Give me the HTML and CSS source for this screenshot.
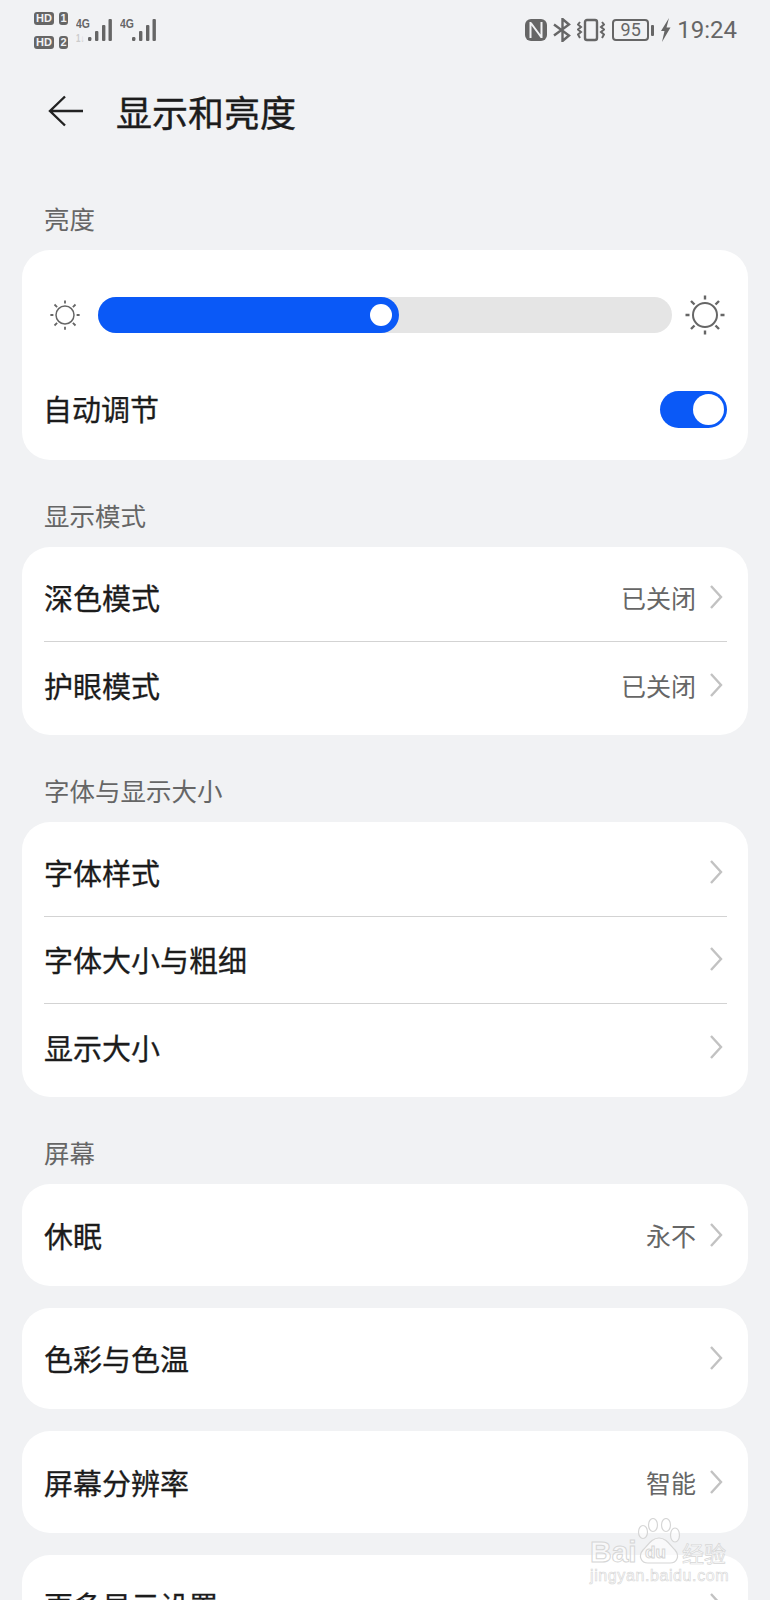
FILE: index.html
```html
<!DOCTYPE html>
<html lang="zh">
<head>
  <meta charset="utf-8">
  <title>显示和亮度</title>
  <link rel="stylesheet" href="styles.css">
</head>
<body>
  <svg class="sprite" width="0" height="0">
    <symbol id="chev" viewBox="0 0 14 24"><path d="M2 1l10 11L2 23" fill="none" stroke="#c2c2c2" stroke-width="2.4"/></symbol>
    <symbol id="sun" viewBox="0 0 40 40">
      <circle cx="20" cy="20" r="12" fill="none" stroke="#666" stroke-width="2"/>
      <path d="M20 .5v4M20 35.500v4M.5 20h4M35.500 20h4M6 6l3.500 3.500M30.500 30.500L34 34M6 34l3.500-3.500M30.500 9.500L34 6" stroke="#666" stroke-width="2.400" fill="none"/>
    </symbol>
    <symbol id="bars" viewBox="0 0 24 22">
      <rect x="0" y="18" width="3.400" height="4" rx="1.200"/><rect x="7" y="12" width="3.400" height="10" rx="1"/><rect x="14" y="6" width="3.400" height="16" rx="1"/><rect x="20.500" y="0" width="3.400" height="22" rx="1"/>
    </symbol>
  </svg>

  <!-- status bar -->
  <div class="status">
    <div class="status-left">
      <div class="sims">
        <div class="sim"><span class="hd">HD</span><span class="simnum">1</span></div>
        <div class="sim"><span class="hd">HD</span><span class="simnum">2</span></div>
      </div>
      <div class="signal"><span class="net">4G</span><span class="net net-low">1↓</span><svg class="bars" width="24" height="22"><use href="#bars"/></svg></div>
      <div class="signal"><span class="net">4G</span><svg class="bars" width="24" height="22"><use href="#bars"/></svg></div>
    </div>
    <div class="status-right">
      <svg width="22" height="22" viewBox="0 0 22 22"><rect width="22" height="22" rx="6" fill="#666"/><path d="M5.500 3v16M5.500 3.500l11 15M16.500 3v16" stroke="#f1f2f4" stroke-width="2" fill="none"/></svg>
      <svg width="18" height="24" viewBox="0 0 18 24"><path d="M1 6.500l15 11-6.500 5.500V1L16 6.500 1 17.500" stroke="#666" stroke-width="2.400" fill="none"/></svg>
      <svg width="28" height="24" viewBox="0 0 28 24"><rect x="8" y="2" width="12" height="20" rx="2" fill="none" stroke="#666" stroke-width="2.400"/><path d="M3 4L1 6.500 4 9 1 11.500 4 14 1 16.500 3 20M25 4l2 2.500L24 9l3 2.500L24 14l3 2.500L25 20" fill="none" stroke="#666" stroke-width="2"/></svg>
      <div class="battery"><span class="battery-box">95</span><span class="battery-tip"></span></div>
      <svg width="11" height="24" viewBox="0 0 11 24"><path d="M9 0L1 13h3.500L2 24l8.500-14.500H6.500z" fill="#666"/></svg>
      <span class="clock">19:24</span>
    </div>
  </div>

  <!-- title -->
  <div class="header">
    <svg class="back" width="36" height="32" viewBox="0 0 36 32"><path d="M17 1.500L2 16l15 14.500M2 16h33" fill="none" stroke="#222" stroke-width="2.400"/></svg>
    <h1>显示和亮度</h1>
  </div>

  <div class="section section-first">亮度</div>
  <div class="card brightness">
    <div class="slider-row">
      <svg class="sun-small" width="30" height="30"><use href="#sun"/></svg>
      <div class="track"><div class="fill"><span class="knob"></span></div></div>
      <svg class="sun-big" width="40" height="40"><use href="#sun"/></svg>
    </div>
    <div class="auto-row">
      <span class="label">自动调节</span>
      <span class="toggle"><span class="thumb"></span></span>
    </div>
  </div>

  <div class="section">显示模式</div>
  <div class="card">
    <div class="row"><span class="label">深色模式</span><span class="value">已关闭</span><svg class="chev" width="14" height="24"><use href="#chev"/></svg></div>
    <div class="row"><span class="label">护眼模式</span><span class="value">已关闭</span><svg class="chev" width="14" height="24"><use href="#chev"/></svg></div>
  </div>

  <div class="section">字体与显示大小</div>
  <div class="card">
    <div class="row"><span class="label">字体样式</span><svg class="chev" width="14" height="24"><use href="#chev"/></svg></div>
    <div class="row"><span class="label">字体大小与粗细</span><svg class="chev" width="14" height="24"><use href="#chev"/></svg></div>
    <div class="row"><span class="label">显示大小</span><svg class="chev" width="14" height="24"><use href="#chev"/></svg></div>
  </div>

  <div class="section">屏幕</div>
  <div class="card single"><span class="label">休眠</span><span class="value">永不</span><svg class="chev" width="14" height="24"><use href="#chev"/></svg></div>
  <div class="card single spaced"><span class="label">色彩与色温</span><svg class="chev" width="14" height="24"><use href="#chev"/></svg></div>
  <div class="card single spaced"><span class="label">屏幕分辨率</span><span class="value">智能</span><svg class="chev" width="14" height="24"><use href="#chev"/></svg></div>
  <div class="card single spaced"><span class="label">更多显示设置</span><svg class="chev" width="14" height="24"><use href="#chev"/></svg></div>

  <!-- watermark -->
  <div class="mark">
    <svg class="paw" width="44" height="46" viewBox="0 0 44 46" fill="rgba(255,255,255,.55)" stroke="#d6d6d6" stroke-width="1.200">
      <ellipse cx="6" cy="14" rx="4.500" ry="6.500"/><ellipse cx="16" cy="7" rx="4.500" ry="6.500"/><ellipse cx="29" cy="7" rx="4.500" ry="6.500"/><ellipse cx="38" cy="17" rx="4.500" ry="7"/>
      <path d="M22 20C15 20 11 27 6 32C1 38 4 45 11 45H33C40 45 43 38 38 32C33 27 29 20 22 20z"/>
    </svg>
    <div class="mark-top"><span class="bai">Bai</span><span class="du">du</span><span class="jy">经验</span></div>
    <div class="mark-url">jingyan.baidu.com</div>
  </div>
</body>
</html>
```

FILE: styles.css
```css
html {
  height: 1600px;
  overflow: hidden;
}

body {
  background-color: #f1f2f4;
  font-family: "Noto Sans CJK SC", "Noto Sans", sans-serif;
  color: #1c1c1c;
  margin: 0;
  height: 1600px;
  overflow: hidden;
  position: relative;
}

.sprite {
  display: block;
  height: 0;
}

/* status bar */
.status {
  display: flex;
  justify-content: space-between;
  height: 60px;
  padding: 0 33px 0 34px;
  box-sizing: border-box;
  color: #666;
}

.status-left {
  display: flex;
  gap: 7px;
  padding-top: 12px;
}

.status-right {
  display: flex;
  align-items: center;
  gap: 6px;
  height: 60px;
}

.sims {
  display: flex;
  flex-direction: column;
  gap: 11px;
}

.sim {
  display: flex;
  gap: 5px;
}

.hd,
.simnum {
  background-color: #666;
  color: #f1f2f4;
  font-family: "Liberation Sans", sans-serif;
  font-size: 11px;
  font-weight: bold;
  line-height: 13px;
  height: 13px;
  border-radius: 3px;
  text-align: center;
}

.hd {
  width: 20px;
}

.simnum {
  width: 9px;
}

.signal {
  position: relative;
  display: flex;
  width: 37px;
  height: 34px;
  justify-content: flex-end;
  align-items: flex-start;
  padding-top: 7px;
  box-sizing: border-box;
}

.signal .bars {
  fill: #666;
}

.net {
  position: absolute;
  left: 1px;
  top: 6px;
  font-family: "Liberation Sans", sans-serif;
  font-size: 13px;
  font-weight: bold;
  line-height: 12px;
  transform: scaleX(.8);
  transform-origin: left;
}

.net-low {
  top: 21px;
  font-size: 10px;
  color: #ccc;
}

.battery {
  display: flex;
  align-items: center;
  gap: 2px;
  margin-left: 1px;
}

.battery-box {
  width: 33px;
  height: 18px;
  border: 2px solid #666;
  border-radius: 4px;
  font-family: Roboto, sans-serif;
  font-size: 18px;
  line-height: 18px;
  text-align: center;
}

.battery-tip {
  width: 3px;
  height: 11px;
  background-color: #666;
  border-radius: 1px;
}

.clock {
  font-family: Roboto, sans-serif;
  font-size: 24px;
  line-height: 30px;
}

/* title */
.header {
  display: flex;
  align-items: center;
  gap: 32px;
  height: 52px;
  margin-top: 25px;
  padding: 0 0 0 48px;
}

.header h1 {
  font-size: 36px;
  font-weight: 400;
  line-height: 52px;
  margin: 0;
  -webkit-text-stroke: .4px #1c1c1c;
}

.section {
  color: #666;
  font-size: 25.5px;
  line-height: 36px;
  padding: 0 44px;
  margin-top: 37px;
  height: 36px;
}

.section-first {
  margin-top: 63px;
}

.section + .card {
  margin-top: 14px;
}

.card {
  background-color: #fff;
  border-radius: 28px;
  margin: 0 22px;
  padding: 8px 21px 6px 22px;
}

.brightness {
  padding: 0 21px 0 28px;
  height: 210px;
}

.slider-row {
  display: flex;
  align-items: center;
  height: 130px;
}

.sun-small {
  margin-right: 18px;
}

.sun-big {
  margin-left: 13px;
}

.track {
  width: 574px;
  height: 36px;
  border-radius: 18px;
  background-color: #e5e5e5;
}

.fill {
  display: flex;
  align-items: center;
  justify-content: flex-end;
  width: 301px;
  height: 36px;
  padding-right: 7px;
  box-sizing: border-box;
  border-radius: 18px;
  background-color: #0a59f7;
}

.knob {
  width: 22px;
  height: 22px;
  border-radius: 50%;
  background-color: #fff;
}

.auto-row {
  display: flex;
  align-items: center;
  justify-content: space-between;
  margin-left: -7px;
  height: 37px;
  margin-top: 11px;
}

.auto-row .label {
  margin-bottom: 4px;
}

.toggle {
  display: flex;
  justify-content: flex-end;
  align-items: center;
  width: 67px;
  height: 37px;
  padding-right: 3px;
  box-sizing: border-box;
  border-radius: 19px;
  background-color: #0a59f7;
}

.thumb {
  width: 31px;
  height: 31px;
  border-radius: 50%;
  background-color: #fff;
}

.row {
  display: flex;
  align-items: center;
  height: 87px;
  padding-bottom: 2px;
  border-bottom: 1px solid #d3d3d3;
  box-sizing: border-box;
}

.row:last-child {
  border-bottom: none;
}

.label {
  font-size: 29px;
  font-weight: 400;
  flex: 1;
  -webkit-text-stroke: .3px #1c1c1c;
}

.value {
  color: #666;
  font-size: 25px;
  margin-right: 13px;
}

.chev {
  margin-right: 4px;
}

.single {
  display: flex;
  align-items: center;
  height: 101.5px;
  box-sizing: border-box;
  padding: 0 21px 0 22px;
}

.spaced {
  margin-top: 22px;
}

/* watermark sits over the cards */
.mark {
  position: absolute;
  left: 590px;
  top: 1518px;
  width: 140px;
  height: 66px;
  color: rgba(255, 255, 255, .55);
}

.paw {
  position: absolute;
  left: 47px;
  top: 0;
}

.mark-top {
  position: absolute;
  left: 0;
  top: 17px;
  display: flex;
  align-items: center;
  font-family: "Liberation Sans", sans-serif;
  font-weight: bold;
  line-height: 30px;
  -webkit-text-stroke: 1px #d6d6d6;
}

.bai {
  font-size: 30px;
  width: 55px;
}

.du {
  font-size: 17px;
  width: 37px;
  margin-top: 3px;
}

.jy {
  font-family: "Noto Sans CJK SC", sans-serif;
  font-size: 22px;
  font-weight: 400;
  -webkit-text-stroke: .7px #d6d6d6;
}

.mark-url {
  position: absolute;
  left: 0;
  top: 49px;
  font-family: "Liberation Sans", sans-serif;
  font-size: 16px;
  letter-spacing: .6px;
  line-height: 18px;
  white-space: nowrap;
  -webkit-text-stroke: .6px #d6d6d6;
}
```
